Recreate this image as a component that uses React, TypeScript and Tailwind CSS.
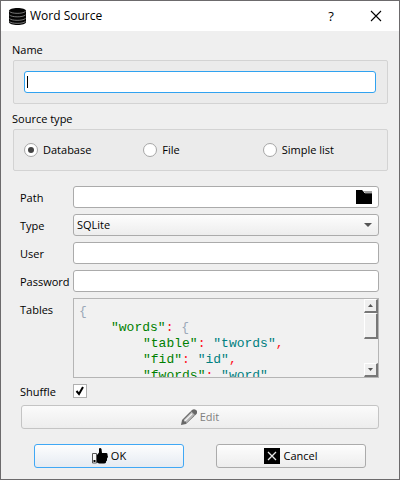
import type { ReactNode } from "react";

const fieldClass =
  "h-[22px] w-full rounded-[3px] border border-[#ababab] bg-white px-1 outline-none";
const buttonClass =
  "flex h-6 items-center justify-center gap-[3px] rounded-[3px] border bg-linear-to-b";

function DatabaseIcon() {
  return (
    <svg width="17" height="17" viewBox="0 0 17 17" aria-hidden="true">
      <path d="M0 3C0 1 4 0 8.500 0S17 1 17 3v11c0 2-4 3-8.500 3S0 16 0 14z" fill="#050505" />
      <g fill="none" stroke="#a8a8a8" strokeWidth="0.7">
        <path d="M0.500 3.500c2 2.300 13 2.600 16 0" />
        <path d="M0.500 7c2 2.300 13 2.600 16 0" />
        <path d="M0.500 10.500c2 2.300 13 2.600 16 0" />
        <path d="M0.500 13.500c2 2.300 13 2.600 16 0" />
      </g>
    </svg>
  );
}

function FolderIcon() {
  return (
    <svg width="16" height="14" viewBox="0 0 16 14" aria-hidden="true">
      <path d="M0 0h6l2 2v1h8v11H0z" fill="#000" />
      <path d="M7 1h9v2H9z" fill="#a3a3a3" />
      <path d="M9 3h7v1H9z" fill="#444" />
    </svg>
  );
}

function PencilIcon() {
  return (
    <svg width="16" height="16" viewBox="0 0 16 16" aria-hidden="true">
      <path d="M0 16l1-5L11 1q2-1.500 4 0t.5 4L5 15z" fill="#686868" />
      <path d="M2.500 11L10 3.500 13 6.500 5.500 14l-1-2z" fill="#b5b5b5" />
      <path d="M3.500 12.300l7.700-7.700" stroke="#f5f5f5" strokeWidth="1.300" />
      <path d="M9.800 2.500l4 4" stroke="#e8e8e8" strokeWidth="0.8" />
    </svg>
  );
}

function ThumbIcon() {
  return (
    <svg width="16" height="16" viewBox="0 0 16 16" aria-hidden="true">
      <path d="M0.500 5.500h4v9.500h-4z" fill="#f5f5f5" stroke="#555" />
      <path d="M1.500 12h2v2h-2z" fill="#000" />
      <path
        d="M5 7l2-2.500V1q0-1 1-1t1.500 1L10 5h4.500q1.500.5 1 2l.5 2-1 1.500v2l-1 1v1q-.5 1-2 1H7l-2-1z"
        fill="#000"
      />
    </svg>
  );
}

function CancelIcon() {
  return (
    <svg width="16" height="16" viewBox="0 0 16 16" aria-hidden="true">
      <path d="M0 0h16v16H0z" fill="#000" />
      <path d="M4 4l8 8M12 4l-8 8" stroke="#e8e8e8" strokeWidth="1.300" />
    </svg>
  );
}

function Row({ id, label, children }: { id: string; label: string; children: ReactNode }) {
  return (
    <div className="flex min-h-[22px]">
      <label htmlFor={id} className="w-[53px] shrink-0 pt-1">
        {label}
      </label>
      <div className="relative min-w-0 flex-1">{children}</div>
    </div>
  );
}

function Radio({ label, checked }: { label: string; checked?: boolean }) {
  return (
    <label className="flex items-center gap-[5px]">
      <input
        type="radio"
        name="source"
        defaultChecked={checked}
        className="grid size-[14px] appearance-none place-items-center rounded-full border border-[#a6a6a6] bg-white before:size-[6px] before:rounded-full checked:before:bg-[#444444]"
      />
      {label}
    </label>
  );
}

function Key({ name }: { name: string }) {
  return (
    <>
      <span className="text-[#008000]">"{name}"</span>
      <span className="text-[#ff1020]">:</span>{" "}
    </>
  );
}

function Value({ text, comma }: { text: string; comma?: boolean }) {
  return (
    <>
      <span className="text-[#008080]">"{text}"</span>
      {comma && <span className="text-[#ff1020]">,</span>}
    </>
  );
}

function ScrollButton({ label, up }: { label: string; up?: boolean }) {
  return (
    <button
      type="button"
      aria-label={label}
      className="grid size-[14px] place-items-center border-r-2 border-b-2 border-t border-l border-t-white border-l-white border-r-[#777777] border-b-[#777777] bg-[#efefef]"
    >
      <svg width="5" height="3" viewBox="0 0 5 3" aria-hidden="true">
        <path d={up ? "M0 3L2.500 0 5 3z" : "M0 0h5L2.500 3z"} fill="#555" />
      </svg>
    </button>
  );
}

export default function App() {
  return (
    <form
      onSubmit={(e) => e.preventDefault()}
      className="flex min-h-screen flex-col border border-[#6c6a6c] bg-[#efefef] font-['Open_Sans','Noto_Sans',sans-serif] text-[11px] leading-4 text-black"
    >
      <header className="flex h-[30px] items-center bg-white pr-[17px] pl-2">
        <DatabaseIcon />
        <h1 className="ml-1 flex-1 text-[12px]">Word Source</h1>
        <button type="button" aria-label="Help" className="mr-[33px] w-3 text-center text-[13px]">
          ?
        </button>
        <button type="button" aria-label="Close">
          <svg width="12" height="12" viewBox="0 0 12 12" aria-hidden="true">
            <path d="M1 1l10 10M11 1L1 11" stroke="#000" strokeWidth="1.100" />
          </svg>
        </button>
      </header>

      <section className="px-[11px] pt-[11px]">
        <label htmlFor="name">Name</label>
        <div className="relative mt-[2px] ml-px rounded-[2px] border border-[#d3d3d3] bg-[#ebebeb] py-[10px] pr-[11px] pl-[10px]">
          <input
            id="name"
            className="block h-[22px] w-full rounded-[3px] border border-[#30a2f0] bg-white px-1 outline-none caret-transparent"
          />
          <span className="absolute top-[15px] left-[13px] h-3 w-px bg-black" />
        </div>
      </section>

      <fieldset className="px-[11px] pt-[7px]">
        <legend className="contents">Source type</legend>
        <div className="mt-[2px] ml-px grid h-[42px] grid-cols-3 items-center rounded-[2px] border border-[#d3d3d3] bg-[#ebebeb] pr-[5px] pl-[10px]">
          <Radio label="Database" checked />
          <Radio label="File" />
          <Radio label="Simple list" />
        </div>
      </fieldset>

      <section className="flex flex-col gap-[6px] pt-[15px] pr-5 pl-[19px]">
        <Row id="path" label="Path">
          <input id="path" className={`${fieldClass} block`} />
          <button type="button" aria-label="Browse" className="absolute top-1 right-[7px]">
            <FolderIcon />
          </button>
        </Row>
        <Row id="type" label="Type">
          <select
            id="type"
            className="block h-[22px] w-full appearance-none rounded-[3px] border border-[#ababab] bg-linear-to-b from-[#fdfdfd] to-[#ededed] pl-[3px] outline-none"
          >
            <option>SQLite</option>
          </select>
          <svg
            width="8"
            height="4"
            viewBox="0 0 8 4"
            aria-hidden="true"
            className="pointer-events-none absolute top-[9px] right-[7px]"
          >
            <path d="M0 0h8L4 4z" fill="#555" />
          </svg>
        </Row>
        <Row id="user" label="User">
          <input id="user" className={`${fieldClass} block`} />
        </Row>
        <Row id="password" label="Password">
          <input id="password" type="password" className={`${fieldClass} block`} />
        </Row>
        <Row id="tables" label="Tables">
          <div className="flex h-20 border border-[#b5b5b5] bg-[#f1f1f1]">
            <div
              id="tables"
              role="textbox"
              aria-label="Tables"
              aria-multiline="true"
              className="min-w-0 flex-1 overflow-hidden pt-[5px] pl-[5px] font-['Liberation_Mono',monospace] text-[13px] whitespace-pre"
            >
              <div className="text-[#9aa8b8]">{"{"}</div>
              <div className="pl-8">
                <Key name="words" />
                <span className="text-[#9aa8b8]">{"{"}</span>
              </div>
              <div className="pl-16">
                <Key name="table" />
                <Value text="twords" comma />
              </div>
              <div className="pl-16">
                <Key name="fid" />
                <Value text="id" comma />
              </div>
              <div className="pl-16">
                <Key name="fwords" />
                <Value text="word" />
              </div>
            </div>
            <div className="flex flex-col">
              <ScrollButton label="Scroll up" up />
              <div className="h-[26px] border-t border-r-2 border-b-2 border-l border-t-white border-r-[#777777] border-b-[#777777] border-l-white bg-[#efefef]" />
              <div className="flex-1" />
              <ScrollButton label="Scroll down" />
            </div>
          </div>
        </Row>
        <div className="flex h-4">
          <label htmlFor="shuffle" className="w-[53px]">
            Shuffle
          </label>
          <span className="relative size-[14px]">
            <input
              id="shuffle"
              type="checkbox"
              defaultChecked
              className="peer block size-[14px] appearance-none border border-[#b0b0b0] bg-white"
            />
            <svg
              width="10"
              height="10"
              viewBox="0 0 10 10"
              aria-hidden="true"
              className="pointer-events-none absolute top-[2px] left-[2px] hidden peer-checked:block"
            >
              <path d="M1.500 5L4 8 8 1" fill="none" stroke="#000" strokeWidth="2" />
            </svg>
          </span>
        </div>
      </section>

      <div className="px-5 pt-[5px]">
        <button
          type="button"
          disabled
          className={`${buttonClass} w-full border-[#c4c4c4] from-[#fbfbfb] to-[#ededed] text-[#808080]`}
        >
          <PencilIcon />
          Edit
        </button>
      </div>

      <footer className="grid grid-cols-2 gap-8 px-[33px] pt-[15px] pb-[10px]">
        <button
          type="submit"
          className={`${buttonClass} border-[#40a8f5] from-[#fdfdfd] to-[#e5ebf2]`}
        >
          <ThumbIcon />
          OK
        </button>
        <button
          type="button"
          className={`${buttonClass} border-[#ababab] from-[#fdfdfd] to-[#ededed]`}
        >
          <CancelIcon />
          Cancel
        </button>
      </footer>
    </form>
  );
}
